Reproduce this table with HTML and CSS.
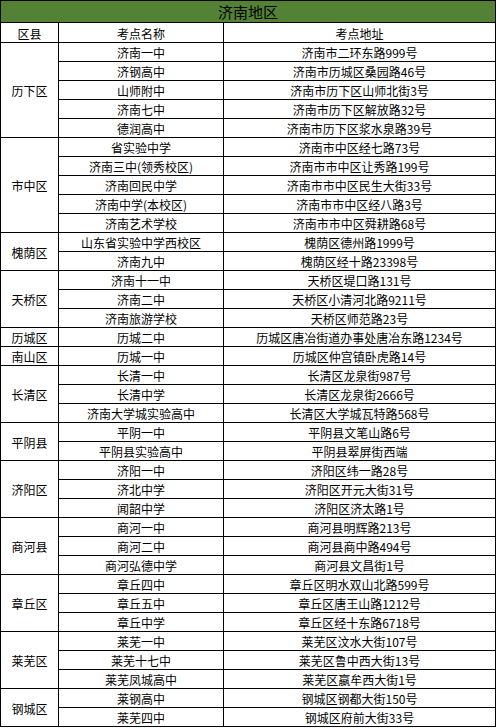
FILE: index.html
```html
<!DOCTYPE html>
<html lang="zh-CN">
<head>
<meta charset="utf-8">
<title>济南地区</title>
<link rel="stylesheet" href="styles.css">
</head>
<body>
<table class="sheet">
  <colgroup>
    <col class="c-district">
    <col class="c-name">
    <col class="c-addr">
  </colgroup>
  <thead>
    <tr class="title-row"><th colspan="3">济南地区</th></tr>
    <tr class="head-row"><th>区县</th><th>考点名称</th><th>考点地址</th></tr>
  </thead>
  <tbody>
    <tr><td rowspan="5">历下区</td><td>济南一中</td><td>济南市二环东路999号</td></tr>
    <tr><td>济钢高中</td><td>济南市历城区桑园路46号</td></tr>
    <tr><td>山师附中</td><td>济南市历下区山师北街3号</td></tr>
    <tr><td>济南七中</td><td>济南市历下区解放路32号</td></tr>
    <tr><td>德润高中</td><td>济南市历下区浆水泉路39号</td></tr>

    <tr><td rowspan="5">市中区</td><td>省实验中学</td><td>济南市中区经七路73号</td></tr>
    <tr><td>济南三中(领秀校区)</td><td>济南市市中区让秀路199号</td></tr>
    <tr><td>济南回民中学</td><td>济南市市中区民生大街33号</td></tr>
    <tr><td>济南中学(本校区)</td><td>济南市市中区经八路3号</td></tr>
    <tr><td>济南艺术学校</td><td>济南市市中区舜耕路68号</td></tr>

    <tr><td rowspan="2">槐荫区</td><td>山东省实验中学西校区</td><td>槐荫区德州路1999号</td></tr>
    <tr><td>济南九中</td><td>槐荫区经十路23398号</td></tr>

    <tr><td rowspan="3">天桥区</td><td>济南十一中</td><td>天桥区堤口路131号</td></tr>
    <tr><td>济南二中</td><td>天桥区小清河北路9211号</td></tr>
    <tr><td>济南旅游学校</td><td>天桥区师范路23号</td></tr>

    <tr><td>历城区</td><td>历城二中</td><td>历城区唐冶街道办事处唐冶东路1234号</td></tr>
    <tr><td>南山区</td><td>历城一中</td><td>历城区仲宫镇卧虎路14号</td></tr>

    <tr><td rowspan="3">长清区</td><td>长清一中</td><td>长清区龙泉街987号</td></tr>
    <tr><td>长清中学</td><td>长清区龙泉街2666号</td></tr>
    <tr><td>济南大学城实验高中</td><td>长清区大学城瓦特路568号</td></tr>

    <tr><td rowspan="2">平阴县</td><td>平阴一中</td><td>平阴县文笔山路6号</td></tr>
    <tr><td>平阴县实验高中</td><td>平阴县翠屏街西端</td></tr>

    <tr><td rowspan="3">济阳区</td><td>济阳一中</td><td>济阳区纬一路28号</td></tr>
    <tr><td>济北中学</td><td>济阳区开元大街31号</td></tr>
    <tr><td>闻韶中学</td><td>济阳区济太路1号</td></tr>

    <tr><td rowspan="3">商河县</td><td>商河一中</td><td>商河县明辉路213号</td></tr>
    <tr><td>商河二中</td><td>商河县商中路494号</td></tr>
    <tr><td>商河弘德中学</td><td>商河县文昌街1号</td></tr>

    <tr><td rowspan="3">章丘区</td><td>章丘四中</td><td>章丘区明水双山北路599号</td></tr>
    <tr><td>章丘五中</td><td>章丘区唐王山路1212号</td></tr>
    <tr><td>章丘中学</td><td>章丘区经十东路6718号</td></tr>

    <tr><td rowspan="3">莱芜区</td><td>莱芜一中</td><td>莱芜区汶水大街107号</td></tr>
    <tr><td>莱芜十七中</td><td>莱芜区鲁中西大街13号</td></tr>
    <tr><td>莱芜凤城高中</td><td>莱芜区嬴牟西大街1号</td></tr>

    <tr><td rowspan="2">钢城区</td><td>莱钢高中</td><td>钢城区钢都大街150号</td></tr>
    <tr><td>莱芜四中</td><td>钢城区府前大街33号</td></tr>
  </tbody>
</table>
</body>
</html>
```
FILE: styles.css
```css
html, body {
  margin: 0;
  padding: 0;
  background: #ffffff;
}

body {
  font-family: "Noto Sans CJK SC", "Liberation Sans", sans-serif;
  font-size: 12px;
  color: #000000;
}

.sheet {
  border-collapse: collapse;
  table-layout: fixed;
  width: 495px;
}

.c-district { width: 58px; }
.c-name { width: 165px; }
.c-addr { width: 272px; }

.sheet th,
.sheet td {
  border: 1px solid #000000;
  padding: 0;
  text-align: center;
  vertical-align: middle;
  font-weight: normal;
  white-space: nowrap;
  overflow: hidden;
  line-height: 17px;
  padding-top: 1px;
}

.sheet tbody tr {
  height: 19px;
}

.title-row {
  height: 22px;
}

.title-row th {
  background: #548235;
  font-size: 15px;
  line-height: 20px;
}

.head-row {
  height: 20px;
}
```
